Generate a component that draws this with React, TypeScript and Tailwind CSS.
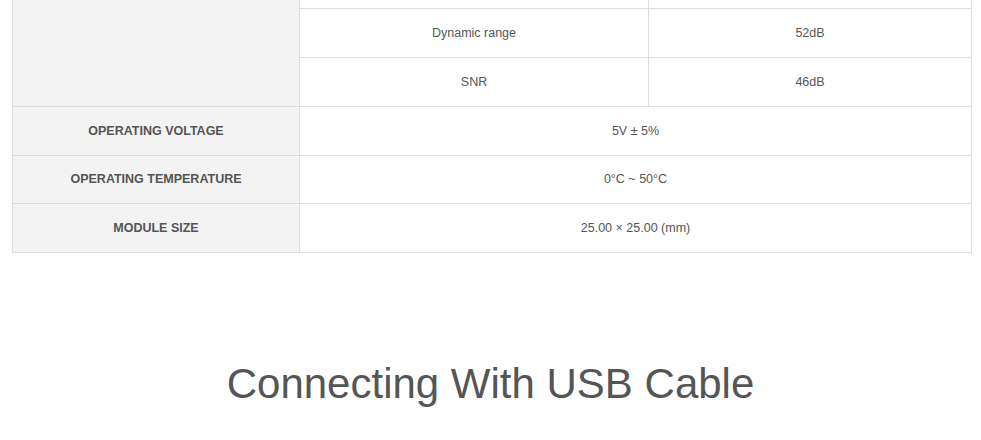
const SUB_ROWS = [
  { label: "", value: "" },
  { label: "Dynamic range", value: "52dB" },
  { label: "SNR", value: "46dB" },
];

const ROWS = [
  { label: "OPERATING VOLTAGE", value: "5V ± 5%", h: "h-[49px]" },
  { label: "OPERATING TEMPERATURE", value: "0°C ~ 50°C", h: "h-[48px]" },
  { label: "MODULE SIZE", value: "25.00 × 25.00 (mm)", h: "h-[49px]" },
];

export default function App() {
  return (
    <div className="h-[440px] overflow-hidden bg-white text-[#555] [font-family:'Liberation_Sans',Arial,sans-serif]">
      <div className="pl-3 pr-[9px] -mt-[41px]">
        <table className="w-full border-collapse text-[12.5px]">
          <colgroup>
            <col className="w-[287px]" />
            <col className="w-[349px]" />
            <col />
          </colgroup>
          <tbody>
            {SUB_ROWS.map((r, i) => (
              <tr key={i}>
                {i === 0 && (
                  <td rowSpan={SUB_ROWS.length} className="border border-[#ddd] bg-[#f3f3f3]" />
                )}
                <td className="h-[49px] border border-[#ddd] text-center align-middle">{r.label}</td>
                <td className="h-[49px] border border-[#ddd] text-center align-middle">{r.value}</td>
              </tr>
            ))}
            {ROWS.map(r => (
              <tr key={r.label}>
                <td className={`${r.h} border border-[#ddd] bg-[#f3f3f3] text-center align-middle font-bold`}>{r.label}</td>
                <td colSpan={2} className={`${r.h} border border-[#ddd] text-center align-middle`}>{r.value}</td>
              </tr>
            ))}
          </tbody>
        </table>
      </div>
      <h2 className="mt-[106px] text-center text-[42px] leading-[1.2] text-[#555]">Connecting With USB Cable</h2>
    </div>
  );
}
